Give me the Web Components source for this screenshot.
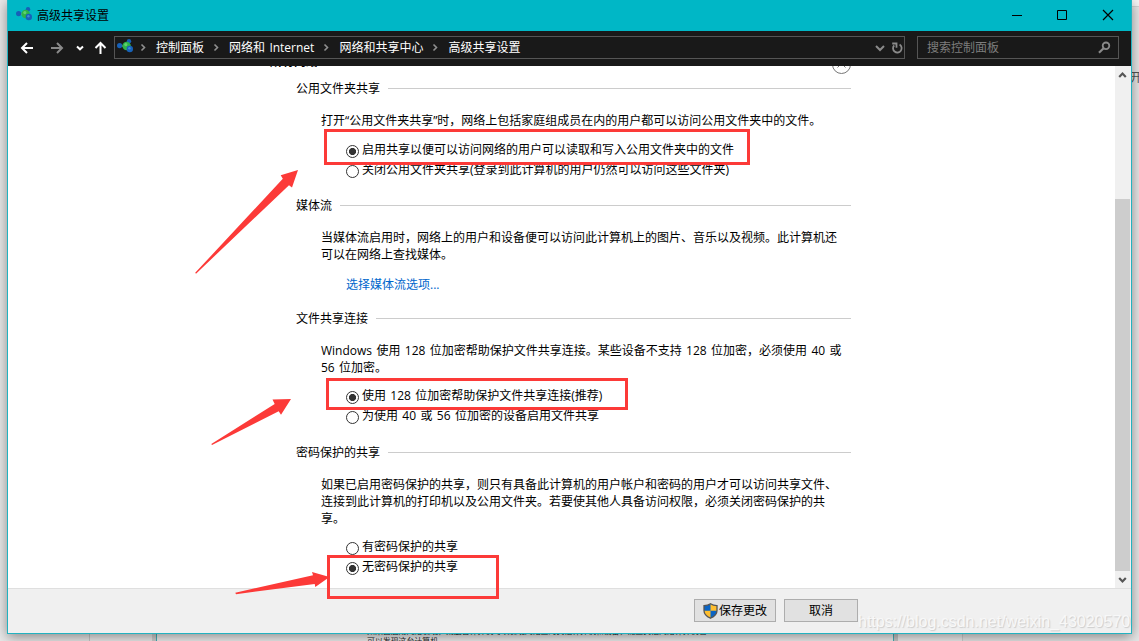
<!DOCTYPE html>
<html lang="zh-CN">
<head>
  <meta charset="UTF-8">
  <meta name="viewport" content="width=device-width, initial-scale=1.0">
  <title>高级共享设置</title>
  <style>
    body {
      margin: 0;
      height: 641px;
      overflow: hidden;
      position: relative;
      background: #e8e8e8;
      font: 12px/17px "Open Sans", "Noto Sans CJK SC", sans-serif;
      word-spacing: 1.25px;
      color: #000;
    }
  </style>
</head>
<body>
  <desk-backdrop></desk-backdrop>

  <settings-window>
    <title-bar slot="title">高级共享设置</title-bar>
    <nav-bar slot="nav">
      <crumb-item>控制面板</crumb-item>
      <crumb-item>网络和 Internet</crumb-item>
      <crumb-item>网络和共享中心</crumb-item>
      <crumb-item>高级共享设置</crumb-item>
      <span slot="search">搜索控制面板</span>
    </nav-bar>

    <profile-head>所有网络</profile-head>
    <setting-group style="--gap: 11px; --after: 17px">
      <span slot="title">公用文件夹共享</span>
      打开“公用文件夹共享”时，网络上包括家庭组成员在内的用户都可以访问公用文件夹中的文件。
      <radio-option slot="options" checked>启用共享以便可以访问网络的用户可以读取和写入公用文件夹中的文件</radio-option>
      <radio-option slot="options">关闭公用文件夹共享(登录到此计算机的用户仍然可以访问这些文件夹)</radio-option>
    </setting-group>
    <setting-group style="--gap: 13px; --after: 16px">
      <span slot="title">媒体流</span>
      当媒体流启用时，网络上的用户和设备便可以访问此计算机上的图片、音乐以及视频。此计算机还<br>可以在网络上查找媒体。
      <text-link slot="options">选择媒体流选项...</text-link>
    </setting-group>
    <setting-group>
      <span slot="title">文件共享连接</span>
      Windows 使用 128 位加密帮助保护文件共享连接。某些设备不支持 128 位加密，必须使用 40 或<br>56 位加密。
      <radio-option slot="options" checked>使用 128 位加密帮助保护文件共享连接(推荐)</radio-option>
      <radio-option slot="options">为使用 40 或 56 位加密的设备启用文件共享</radio-option>
    </setting-group>
    <setting-group>
      <span slot="title">密码保护的共享</span>
      如果已启用密码保护的共享，则只有具备此计算机的用户帐户和密码的用户才可以访问共享文件、<br>连接到此计算机的打印机以及公用文件夹。若要使其他人具备访问权限，必须关闭密码保护的共<br>享。
      <radio-option slot="options">有密码保护的共享</radio-option>
      <radio-option slot="options" checked>无密码保护的共享</radio-option>
    </setting-group>

    <push-button slot="footer" shield style="width: 82px">保存更改</push-button>
    <push-button slot="footer" style="width: 74px">取消</push-button>
  </settings-window>

  <mark-layer>https://blog.csdn.net/weixin_43020570</mark-layer>

  <template id="backdrop-tpl">
    <style>
      :host { position: absolute; inset: 0; overflow: hidden; display: flex; align-items: flex-end; }
      .strip { display: flex; width: 100%; height: 100%; }
      .a { width: 89px; background: #e9e9e9; border-right: 1px solid #c9c9c9; }
      .b { width: 62px; background: #ececec; }
      .c { width: 4px; background: #cfcfcf; }
      .d { width: 736px; background: #eee; border: solid #45b0b8; border-width: 0 1px; }
      .e { width: 4px; background: #c8c8c8; }
      .f { width: 64px; background: #eee; border-right: 1px solid #d0d0d0; }
      .g { flex: 1; background: linear-gradient(#f6f6f6 6px, #d4d4d4 6px 7px, #e7e7e7 7px); }
      p { position: absolute; margin: 0; white-space: nowrap; color: #222; }
      .note { left: 367px; top: 626px; font-size: 7.9px; line-height: 10px; }
      .side { left: 1130px; top: 69px; color: #555; }
    </style>
    <div class="strip">
      <div class="a"></div><div class="b"></div><div class="c"></div><div class="d"></div>
      <div class="e"></div><div class="f"></div><div class="g"></div>
    </div>
    <p class="note">如果已启用网络发现，则这台计算机可以发现网络上的其他计算机和设备，而且其他网络计算机也<br>可以发现这台计算机。</p>
    <p class="side">开</p>
  </template>

  <template id="window-tpl">
    <style>
      :host {
        position: absolute; left: 7px; top: 0; width: 1125px; height: 634px;
        box-sizing: border-box; border: 1px solid #22b2c0; border-top: 0;
        display: flex; flex-direction: column; background: #fff;
        box-shadow: 0 3px 12px rgba(0, 0, 0, .42);
      }
      .body { flex: 1; min-height: 0; display: flex; }
      .view { flex: 1; overflow: hidden; padding-left: 262px; }
      .bar { width: 16px; background: #f0f0f0; display: flex; flex-direction: column; }
      .bar svg { height: 17px; width: 15px; fill: none; stroke: #555; stroke-width: 2.2; }
      .thumb { margin: 116px 1px 0 0; flex: 1; background: #cdcdcd; }
      footer {
        height: 45px; box-sizing: border-box; border-top: 1px solid #dfdfdf; background: #f0f0f0;
        display: flex; justify-content: flex-end; gap: 8px; padding: 10px 273px 0 0;
      }
    </style>
    <slot name="title"></slot>
    <slot name="nav"></slot>
    <div class="body">
      <div class="view"><slot></slot></div>
      <div class="bar">
        <svg viewBox="0 0 15 17"><path d="M4.2 11 7.5 7.6 10.8 11"/></svg>
        <div class="thumb"></div>
        <svg viewBox="0 0 15 17"><path d="M4.2 7 7.5 10.4 10.8 7"/></svg>
      </div>
    </div>
    <footer><slot name="footer"></slot></footer>
  </template>

  <template id="title-tpl">
    <style>
      :host { height: 31px; display: flex; align-items: center; background: #00b7c6; padding-left: 8px; }
      .text { margin-left: 5px; flex: 1; }
      .ctl { width: 46px; height: 31px; fill: none; stroke: #000; }
    </style>
    <net-icon></net-icon>
    <span class="text"><slot></slot></span>
    <svg class="ctl" viewBox="0 0 46 31"><path d="M19 15.5h10"/></svg>
    <svg class="ctl" viewBox="0 0 46 31"><path d="M18.5 10.5h9v9h-9z"/></svg>
    <svg class="ctl" viewBox="0 0 46 31"><path d="M18 10l10 10M28 10 18 20" stroke-width="1.2"/></svg>
  </template>

  <template id="nav-tpl">
    <style>
      :host { height: 35px; box-sizing: border-box; display: flex; align-items: center; background: #191919; color: #fff; padding: 0 12px 2px; }
      svg { fill: none; stroke: #fff; stroke-width: 2; flex: none; }
      .dim { stroke: #8a8a8a; }
      .box { height: 23px; box-sizing: border-box; border: 1px solid #555; display: flex; align-items: center; }
      .address { width: 791px; margin-left: 7px; padding-left: 2px; }
      .crumbs { display: flex; flex: 1; margin-left: -2px; }
      .search { width: 202px; margin-left: 12px; padding: 0 7px 0 9px; color: #7d7d7d; justify-content: space-between; }
    </style>
    <svg width="14" height="14" viewBox="0 0 14 14"><path d="M13 7H2M7 2 2 7l5 5"/></svg>
    <svg class="dim" width="14" height="14" viewBox="0 0 14 14" style="margin-left: 16px"><path d="M1 7h11M7 2l5 5-5 5"/></svg>
    <svg width="8" height="8" viewBox="0 0 8 8" style="margin-left: 12px"><path d="M1 2.5 4 5.3l3-2.8"/></svg>
    <svg width="13" height="14" viewBox="0 0 13 14" style="margin-left: 10px"><path d="M6.5 13V2M1.500 7l5-5 5 5"/></svg>
    <div class="box address">
      <net-icon></net-icon>
      <div class="crumbs"><slot></slot></div>
      <svg class="dim" width="10" height="8" viewBox="0 0 10 8"><path d="M1 2l4 4 4-4"/></svg>
      <svg class="dim" width="12" height="12" viewBox="0 0 12 12" style="margin: 0 1px 0 6px"><path d="M8.600 2.600A4.300 4.300 0 1 1 3.200 3.300M1.200 1.500h4.300v4.300" stroke-width="1.800"/></svg>
    </div>
    <div class="box search">
      <slot name="search"></slot>
      <svg class="dim" width="13" height="13" viewBox="0 0 13 13"><circle cx="8" cy="4.8" r="3.3" stroke-width="1.8"/><path d="M5.600 7.200 1 11.800" stroke-width="2.200"/></svg>
    </div>
  </template>

  <template id="crumb-tpl">
    <style>
      :host { display: flex; align-items: center; white-space: nowrap; }
      svg { width: 25px; height: 9px; fill: none; stroke: #8f8f8f; stroke-width: 1.6; }
    </style>
    <svg viewBox="0 0 25 9"><path d="M10.5 1.5l3 3-3 3"/></svg>
    <slot></slot>
  </template>

  <template id="net-tpl">
    <style>
      :host { display: block; width: 16px; height: 14px; margin-bottom: 3px; }
      svg { display: block; }
    </style>
    <svg width="16" height="14" viewBox="0 0 16 14">
      <path d="M3 7h6l3-5" stroke="#8ba" fill="none"/>
      <circle cx="12" cy="2.3" r="2.2" fill="#1660b8"/>
      <circle cx="2.6" cy="6.6" r="2.6" fill="#1660b8"/>
      <circle cx="9.6" cy="7" r="4.2" fill="#2cb34a"/>
      <circle cx="8.8" cy="5.6" r="1.6" fill="#5fd06e"/>
      <circle cx="12.8" cy="10" r="3.2" fill="#1762b8"/>
      <circle cx="12.4" cy="9.2" r="1.2" fill="#3f8bd8"/>
    </svg>
  </template>

  <template id="profile-tpl">
    <style>
      /* the profile heading is scrolled nearly out of the view */
      :host { display: flex; justify-content: space-between; width: 581px; height: 20px; margin-top: -11px; margin-bottom: 5px; font-weight: bold; }
      .name { margin-top: -2px; }
      svg { fill: none; stroke: #777; }
    </style>
    <span class="name"><slot></slot></span>
    <svg width="20" height="20" viewBox="0 0 20 20"><circle cx="10.5" cy="9.5" r="9"/><path d="M6.5 12.500l4-4 4 4"/></svg>
  </template>

  <template id="group-tpl">
    <style>
      :host { display: block; width: 555px; margin-left: 26px; margin-bottom: var(--after, 18px); white-space: nowrap; }
      header { display: flex; align-items: center; gap: 8px; height: 16px; margin-bottom: 16px; }
      header::after { content: ""; flex: 1; height: 1px; background: #ccc; }
      .text { padding-left: 25px; }
      .options { padding-left: 50px; margin-top: var(--gap, 10px); }
    </style>
    <header><slot name="title"></slot></header>
    <div class="text"><slot></slot></div>
    <div class="options"><slot name="options"></slot></div>
  </template>

  <template id="radio-tpl">
    <style>
      :host { display: flex; align-items: center; gap: 3px; height: 20px; }
      i { width: 13px; height: 13px; box-sizing: border-box; border: 1px solid #333; border-radius: 50%; margin-top: 3px; background: #fff; }
      :host([checked]) i { background: radial-gradient(circle, #333 3.2px, #fff 3.9px); }
      span { padding-bottom: 2px; }
    </style>
    <i></i><span><slot></slot></span>
  </template>

  <template id="link-tpl">
    <style>
      :host { display: block; height: 18px; line-height: 18px; color: #0066cc; }
    </style>
    <slot></slot>
  </template>

  <template id="button-tpl">
    <style>
      :host { display: flex; align-items: center; justify-content: center; gap: 1px; height: 23px; box-sizing: border-box; border: 1px solid #adadad; background: #e1e1e1; }
      svg { display: none; }
      :host([shield]) svg { display: block; }
    </style>
    <svg width="15" height="16" viewBox="0 0 15 16">
      <path d="M7.5.8C5.5 2.2 3.5 2.7 1 2.7V7.5C1 11 4 13.7 7.5 15.2 11 13.7 14 11 14 7.5V2.7C11.5 2.7 9.5 2.2 7.5.8z" fill="#ffbe2e"/>
      <path d="M7.5.8C5.5 2.2 3.5 2.7 1 2.7V7.8H7.5zM7.5 7.8H14C14 11 11 13.7 7.5 15.2z" fill="#0a64c4"/>
      <path d="M7.5.8C5.5 2.2 3.5 2.7 1 2.7V7.5C1 11 4 13.7 7.5 15.2 11 13.7 14 11 14 7.5V2.7C11.5 2.7 9.5 2.2 7.5.8z" fill="none" stroke="#555" stroke-width="1.3"/>
    </svg>
    <span><slot></slot></span>
  </template>

  <template id="mark-tpl">
    <style>
      :host { position: absolute; inset: 0; pointer-events: none; }
      svg { position: absolute; left: 0; top: 0; }
      .water {
        position: absolute; left: 858px; top: 613px; white-space: nowrap;
        font: 16px/18px "Liberation Sans", sans-serif;
        color: #f8f8f8; text-shadow: 1px 1px 1px #ccc;
      }
    </style>
    <svg width="1139" height="641" viewBox="0 0 1139 641">
      <g fill="none" stroke="#fc3a38" stroke-width="3">
        <rect x="325.5" y="130.5" width="423" height="33"/>
        <rect x="327.5" y="379.5" width="299" height="29"/>
        <rect x="328.5" y="556.5" width="169" height="41"/>
      </g>
      <g fill="#fc3a38">
        <path d="M195.2 272.8 282.8 178.8 280.7 175.3 298 170 292 187.5 289 185.2 196 273.7z"/>
        <path d="M211.3 444 274.7 404 272.5 399.5 291 399 281 414.7 278.7 411.3 212 444.9z"/>
        <path d="M235.3 592.8 313 575.2 312 572 329.5 577 315.3 587 314.7 583.9 236 594.2z"/>
      </g>
    </svg>
    <span class="water"><slot></slot></span>
  </template>

  <script>
    // every element only clones its template into an open shadow root
    function define(name, templateId) {
      customElements.define(name, class extends HTMLElement {
        constructor() {
          super();
          this.attachShadow({ mode: 'open' });
          const tpl = document.getElementById(templateId);
          this.shadowRoot.appendChild(tpl.content.cloneNode(true));
        }
      });
    }

    define('net-icon', 'net-tpl');
    define('desk-backdrop', 'backdrop-tpl');
    define('settings-window', 'window-tpl');
    define('title-bar', 'title-tpl');
    define('nav-bar', 'nav-tpl');
    define('crumb-item', 'crumb-tpl');
    define('profile-head', 'profile-tpl');
    define('setting-group', 'group-tpl');
    define('radio-option', 'radio-tpl');
    define('text-link', 'link-tpl');
    define('push-button', 'button-tpl');
    define('mark-layer', 'mark-tpl');
  </script>
</body>
</html>
